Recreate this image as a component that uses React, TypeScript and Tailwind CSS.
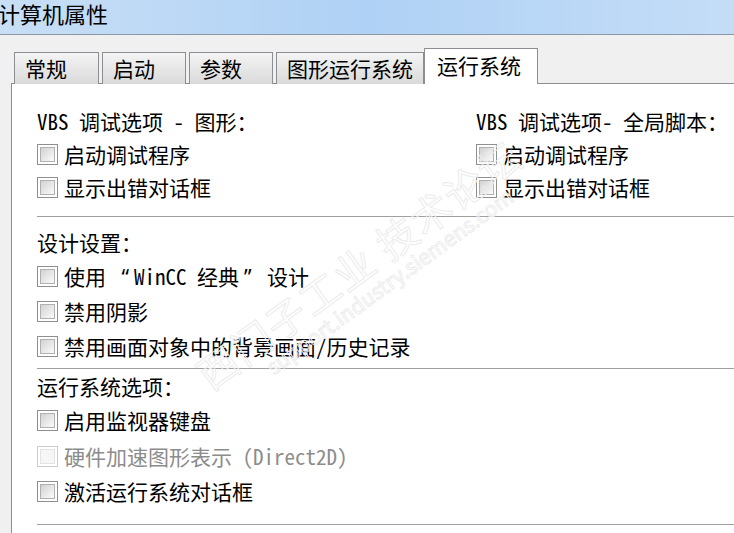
import clsx from 'clsx';
import type { ReactNode } from 'react';

const font = "font-['Noto_Sans_Mono_CJK_SC','Noto_Sans_CJK_SC','Noto_Sans',sans-serif]";

const tabs = [
  { label: '常规', width: 'w-[85px]' },
  { label: '启动', width: 'w-[84px]' },
  { label: '参数', width: 'w-[84px]' },
  { label: '图形运行系统', width: 'w-[148px]' },
];

function CheckBox({ disabled }: { disabled?: boolean }) {
  return (
    <span
      className={clsx(
        'w-[21px] h-[21px] border bg-white flex items-center justify-center shrink-0',
        disabled ? 'border-[#cdcdcd]' : 'border-[#8e8f8f]'
      )}
    >
      <span
        className={clsx(
          'w-[15px] h-[15px] border',
          disabled
            ? 'border-[#e3e3e3] bg-[#f6f6f6]'
            : 'border-[#b0b0b0] bg-linear-to-br from-[#d2d2d2] to-[#fbfbfb]'
        )}
      />
    </span>
  );
}

function Option({ label, disabled }: { label: ReactNode; disabled?: boolean }) {
  return (
    <div className="h-[33px] flex items-center gap-[6px]">
      <CheckBox disabled={disabled} />
      <span className={clsx('whitespace-nowrap', disabled ? 'text-[#8c8c8c]' : 'text-black')}>{label}</span>
    </div>
  );
}

function Heading({ children }: { children: string }) {
  return <div className="h-[33px] flex items-center whitespace-nowrap">{children}</div>;
}

function Divider() {
  return <div className="h-[2px] border-t border-b border-t-[#a0a0a0] border-b-white bg-[#d4d4d4]" />;
}

// curly quotes are half width in the original dialog font
function Q({ children }: { children: string }) {
  return <span className="font-['Noto_Sans',sans-serif] px-[5px]">{children}</span>;
}

export default function App() {
  return (
    <div className={clsx('w-[734px] h-[533px] overflow-hidden bg-[#f0f0f0] flex flex-col text-[21px] leading-none', font)}>
      {/* Title bar */}
      <div className="h-[35px] shrink-0 border-b border-[#8d97a3] bg-linear-to-r from-[#c8dff5] via-[#afd1f5] to-[#c4ddf7] pt-[2px]">
        <span className="text-[22px] text-black -ml-[2px] font-['Noto_Sans_CJK_SC',sans-serif]">计算机属性</span>
      </div>

      <div className="relative flex-1 flex flex-col pl-[11px] pt-[13px]">
        {/* Tabs */}
        <div className="relative z-10 flex items-end pl-[3px] -mb-px h-[36px]">
          {tabs.map((t, i) => (
            <div
              key={t.label}
              className={clsx(
                'h-[32px] border border-b-0 border-[#8c8e94] bg-linear-to-b from-[#f4f4f4] to-[#dadada] flex items-center pl-[10px] text-black whitespace-nowrap',
                t.width,
                i > 0 && 'ml-[3px]'
              )}
            >
              {t.label}
            </div>
          ))}
          <div className="w-[114px] h-[36px] border border-b-0 border-[#8c8e94] bg-white flex items-center pl-[12px] pb-[2px] whitespace-nowrap text-black">
            运行系统
          </div>
        </div>

        {/* Panel */}
        <div className="flex-1 bg-white border-l border-t border-[#8c8e94] pl-[25px] pt-[21px]">
          <div className="flex">
            <div className="w-[439px]">
              <Heading>VBS 调试选项 - 图形：</Heading>
              <Option label="启动调试程序" />
              <Option label="显示出错对话框" />
            </div>
            <div>
              <Heading>VBS 调试选项- 全局脚本：</Heading>
              <Option label="启动调试程序" />
              <Option label="显示出错对话框" />
            </div>
          </div>
          <div className="mt-[12px]">
            <Divider />
          </div>

          <div className="pt-[8px]">
            <Heading>设计设置：</Heading>
            <div className="h-[35px] flex items-center">
              <Option
                label={
                  <>
                    使用 <Q>“</Q>WinCC 经典<Q>”</Q> 设计
                  </>
                }
              />
            </div>
            <div className="h-[35px] flex items-center">
              <Option label="禁用阴影" />
            </div>
            <div className="h-[35px] flex items-center">
              <Option label="禁用画面对象中的背景画面/历史记录" />
            </div>
          </div>
          <div className="mt-[4px]">
            <Divider />
          </div>

          <div>
            <Heading>运行系统选项：</Heading>
            <div className="h-[35px] flex items-center">
              <Option label="启用监视器键盘" />
            </div>
            <div className="h-[36px] flex items-center">
              <Option label="硬件加速图形表示 (Direct2D)" disabled />
            </div>
            <div className="h-[35px] flex items-center">
              <Option label="激活运行系统对话框" />
            </div>
          </div>
          <div className="mt-[15px]">
            <Divider />
          </div>
        </div>

        {/* Forum watermark */}
        <div className="pointer-events-none absolute left-[365px] top-[238px] -translate-x-1/2 -translate-y-1/2 rotate-[-36deg] flex flex-col items-center whitespace-nowrap font-['Noto_Sans_CJK_SC',sans-serif]">
          <span className="text-[40px] text-transparent [-webkit-text-stroke:1px_#ececec] tracking-[2px]">西门子工业 技术论坛</span>
          <span className="text-[21px] text-transparent [-webkit-text-stroke:1px_#ededed] mt-[2px] ml-[30px]">support.industry.siemens.com</span>
        </div>
      </div>
    </div>
  );
}
